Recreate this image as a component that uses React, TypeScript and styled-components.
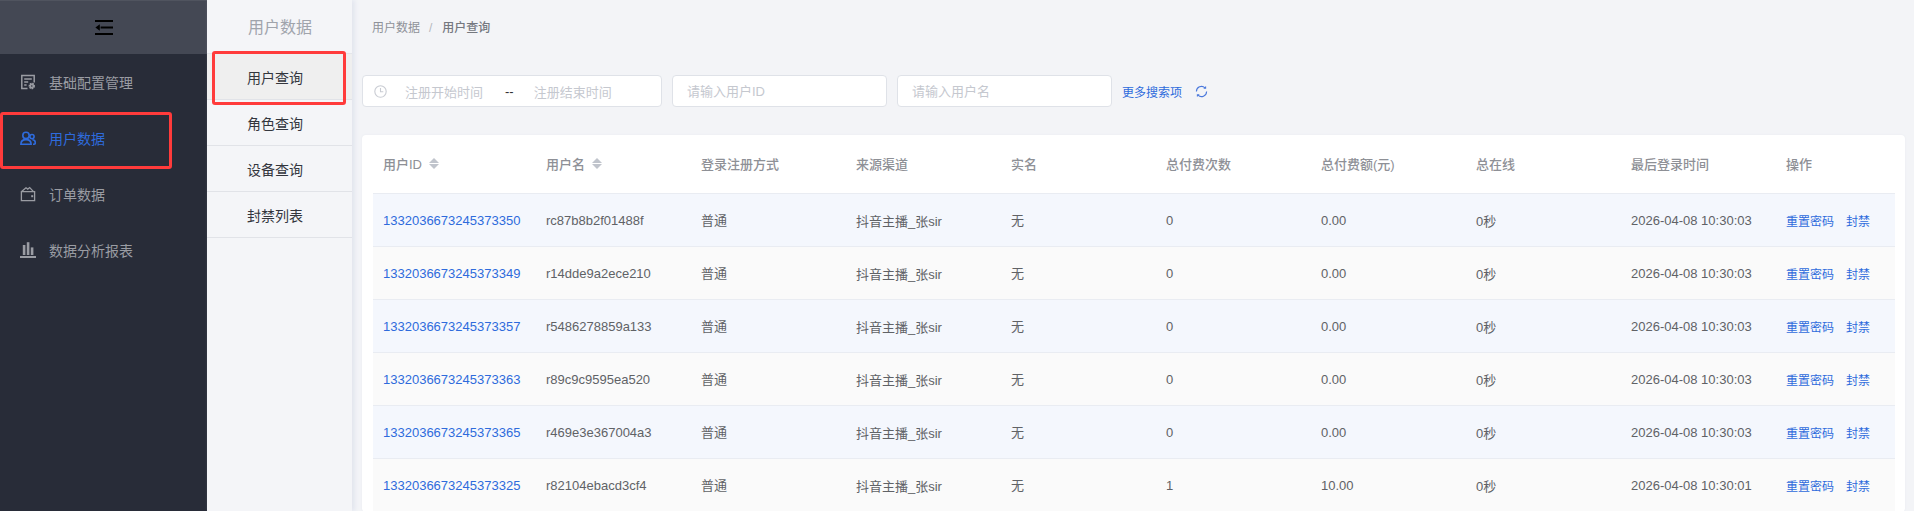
import React from "react";
import styled, { createGlobalStyle } from "styled-components";

const FONT = '"Liberation Sans", "Noto Sans CJK SC", sans-serif';

const GlobalStyle = createGlobalStyle`
  html, body {
    margin: 0;
    padding: 0;
    height: 100%;
    overflow: hidden;
  }
  body {
    font-family: ${FONT};
    background: #f3f4f7;
  }
`;

const menuItems = [
  { label: "基础配置管理", icon: "config" },
  { label: "用户数据", icon: "users", active: true },
  { label: "订单数据", icon: "wallet" },
  { label: "数据分析报表", icon: "chart" },
];

const subItems = ["用户查询", "角色查询", "设备查询", "封禁列表"];

const columns = [
  { title: "用户ID", sort: true },
  { title: "用户名", sort: true },
  { title: "登录注册方式" },
  { title: "来源渠道" },
  { title: "实名" },
  { title: "总付费次数" },
  { title: "总付费额(元)" },
  { title: "总在线" },
  { title: "最后登录时间" },
  { title: "操作" },
];

const rows = [
  ["1332036673245373350", "rc87b8b2f01488f", "0", "0.00", "2026-04-08 10:30:03"],
  ["1332036673245373349", "r14dde9a2ece210", "0", "0.00", "2026-04-08 10:30:03"],
  ["1332036673245373357", "r5486278859a133", "0", "0.00", "2026-04-08 10:30:03"],
  ["1332036673245373363", "r89c9c9595ea520", "0", "0.00", "2026-04-08 10:30:03"],
  ["1332036673245373365", "r469e3e367004a3", "0", "0.00", "2026-04-08 10:30:03"],
  ["1332036673245373325", "r82104ebacd3cf4", "1", "10.00", "2026-04-08 10:30:01"],
];

const MenuIcon = ({ name }: { name: string }) => {
  if (name === "config") {
    return (
      <svg width="16" height="16" viewBox="0 0 16 16" fill="none" stroke="currentColor" strokeWidth="1.5">
        <path d="M7.5 14.5H1.8V1.5h12.4v7" />
        <path d="M4.2 5h7.6M4.2 8h4M4.2 11h2.4" />
        <circle cx="11.8" cy="12" r="2.4" fill="currentColor" strokeDasharray="1.5 0.6" strokeWidth="1.6" />
        <circle cx="11.8" cy="12" r="0.8" fill="#282c38" stroke="none" />
      </svg>
    );
  }
  if (name === "users") {
    return (
      <svg width="16" height="16" viewBox="0 0 16 16" fill="none" stroke="currentColor" strokeWidth="1.6">
        <circle cx="6" cy="5.4" r="3.2" />
        <path d="M0.9 14.2c0-3 2.2-4.6 5.1-4.6s5.1 1.6 5.1 4.6z" />
        <circle cx="12" cy="6.6" r="2.1" />
        <path d="M12.4 9.8c1.9 0 2.9 1.2 2.9 3 0 .8-.5 1.4-1.3 1.4h-1" />
      </svg>
    );
  }
  if (name === "wallet") {
    return (
      <svg width="16" height="16" viewBox="0 0 16 16" fill="none" stroke="currentColor" strokeWidth="1.3">
        <path d="M1.4 5.6h13.2v9H1.4z" />
        <path d="M1.6 5.6 6 1.8l1.8 1.3 1.9-1.5 3.8 4" />
        <rect x="11.2" y="9.2" width="2" height="2" fill="currentColor" stroke="none" />
      </svg>
    );
  }
  return (
    <svg width="16" height="16" viewBox="0 0 16 16" fill="currentColor">
      <rect x="0" y="14" width="16" height="2" />
      <rect x="2.8" y="3" width="2.6" height="10" />
      <rect x="6.8" y="0.2" width="2.6" height="12.8" />
      <rect x="10.8" y="5.4" width="2.6" height="7.6" />
    </svg>
  );
};

const App = () => {
  return (
    <>
      <GlobalStyle />
      <Page>
        <Sidebar>
          <Collapse>
            <svg width="18" height="15" viewBox="0 0 18 15" fill="#000">
              <rect x="0" y="0" width="18" height="2" />
              <rect x="5.6" y="6.5" width="12.4" height="2" />
              <rect x="0" y="13" width="18" height="2" />
              <path d="M0.4 7.5 4.8 4.2v6.6z" />
            </svg>
          </Collapse>
          <Menu>
            {menuItems.map((item) => (
              <MenuItem key={item.label} $active={item.active}>
                <MenuIconBox>
                  <MenuIcon name={item.icon} />
                </MenuIconBox>
                {item.label}
                {item.active && <Highlight $left={0} $top={2} $width={172} $height={57} />}
              </MenuItem>
            ))}
          </Menu>
        </Sidebar>
        <SubMenu>
          <SubTitle>用户数据</SubTitle>
          {subItems.map((item, index) => (
            <SubItem key={item} $active={index === 0}>
              {item}
              {index === 0 && <Highlight $left={5} $top={-3} $width={134} $height={54} />}
            </SubItem>
          ))}
        </SubMenu>
        <Main>
          <Breadcrumb>
            <Crumb>用户数据</Crumb>
            <CrumbSep>/</CrumbSep>
            <Crumb $current>用户查询</Crumb>
          </Breadcrumb>
          <Filters>
            <DateRange>
              <svg width="13" height="13" viewBox="0 0 13 13" fill="none" stroke="#c9ccd3" strokeWidth="1.1">
                <circle cx="6.5" cy="6.5" r="5.7" />
                <path d="M6.5 3v3.7h2.8" />
              </svg>
              <DatePlaceholder $left={18}>注册开始时间</DatePlaceholder>
              <DateDash>--</DateDash>
              <DatePlaceholder $left={20}>注册结束时间</DatePlaceholder>
            </DateRange>
            <TextInput placeholder="请输入用户ID" readOnly />
            <TextInput placeholder="请输入用户名" readOnly />
            <MoreLink>更多搜索项</MoreLink>
            <RefreshButton>
              <svg width="13" height="13" viewBox="0 0 13 13" fill="none" stroke="#4a78dc" strokeWidth="1.1">
                <path d="M1.4 6.5a5.1 5.1 0 0 1 8.6-3.7" />
                <path d="M11.6 6.5a5.1 5.1 0 0 1-8.6 3.7" />
                <path d="M10.6 1.4v1.9H8.7" />
                <path d="M2.4 11.6V9.7h1.9" />
              </svg>
            </RefreshButton>
          </Filters>
          <Card>
            <HeaderRow>
              {columns.map((col) => (
                <HeaderCell key={col.title}>
                  {col.title}
                  {col.sort && (
                    <SortIcon>
                      <SortUp />
                      <SortDown />
                    </SortIcon>
                  )}
                </HeaderCell>
              ))}
            </HeaderRow>
            {rows.map((row, index) => (
              <Row key={row[0]} $odd={index % 2 === 0}>
                <Cell>
                  <Link>{row[0]}</Link>
                </Cell>
                <Cell>{row[1]}</Cell>
                <Cell $cjk>普通</Cell>
                <Cell>抖音主播_张sir</Cell>
                <Cell $cjk>无</Cell>
                <Cell>{row[2]}</Cell>
                <Cell>{row[3]}</Cell>
                <Cell>0秒</Cell>
                <Cell>{row[4]}</Cell>
                <Cell>
                  <ActionLink>重置密码</ActionLink>
                  <ActionLink>封禁</ActionLink>
                </Cell>
              </Row>
            ))}
          </Card>
        </Main>
      </Page>
    </>
  );
};

export default App;

const Page = styled.div`
  display: flex;
  width: 1914px;
  height: 511px;
  overflow: hidden;
  background: #f3f4f7;
`;

const Sidebar = styled.div`
  flex: 0 0 207px;
  background: #282c38;
`;

const Collapse = styled.div`
  height: 54px;
  display: flex;
  align-items: center;
  justify-content: center;
  background: #444854;
  border-top: 1px solid #50545f;
  box-sizing: border-box;
`;

const Menu = styled.div``;

const MenuItem = styled.div<{ $active?: boolean }>`
  position: relative;
  height: 56px;
  display: flex;
  align-items: center;
  padding-left: 20px;
  font-size: 14px;
  color: ${({ $active }) => ($active ? "#2e6bdc" : "#9a9ca3")};
`;

const MenuIconBox = styled.span`
  width: 29px;
  display: flex;
  align-items: center;
`;

const Highlight = styled.div<{ $left: number; $top: number; $width: number; $height: number }>`
  position: absolute;
  left: ${({ $left }) => $left}px;
  top: ${({ $top }) => $top}px;
  width: ${({ $width }) => $width}px;
  height: ${({ $height }) => $height}px;
  box-sizing: border-box;
  border: 3px solid #ff3b3b;
  border-radius: 3px;
`;

const SubMenu = styled.div`
  flex: 0 0 145px;
  background: #f4f5f8;
  box-shadow: 3px 0 4px #e3e6ef;
  z-index: 1;
`;

const SubTitle = styled.div`
  height: 53px;
  line-height: 56px;
  padding-left: 41px;
  font-size: 16px;
  color: #a0a4ac;
  border-bottom: 1px solid #e4e6ea;
`;

const SubItem = styled.div<{ $active?: boolean }>`
  position: relative;
  height: 45px;
  line-height: 48px;
  padding-left: 40px;
  font-size: 14px;
  color: #33363d;
  background: ${({ $active }) => ($active ? "#efefef" : "transparent")};
  border-bottom: 1px solid #e1e3e8;
`;

const Main = styled.div`
  flex: 1;
  min-width: 0;
  padding: 0 9px 0 10px;
`;

const Breadcrumb = styled.div`
  height: 75px;
  padding: 21px 0 0 10px;
  box-sizing: border-box;
  display: flex;
  align-items: flex-start;
  font-size: 12px;
  line-height: 14px;
`;

const Crumb = styled.span<{ $current?: boolean }>`
  color: ${({ $current }) => ($current ? "#75787f" : "#8f9299")};
  font-weight: ${({ $current }) => ($current ? 500 : 400)};
`;

const CrumbSep = styled.span`
  margin: 0 10px 0 9px;
  color: #b4b7bd;
`;

const Filters = styled.div`
  display: flex;
  align-items: center;
  height: 32px;
  margin-bottom: 28px;
`;

const DateRange = styled.div`
  width: 300px;
  height: 32px;
  box-sizing: border-box;
  display: flex;
  align-items: center;
  padding-left: 11px;
  background: #fff;
  border: 1px solid #dfe2e8;
  border-radius: 4px;
  margin-right: 10px;
`;

const DatePlaceholder = styled.span<{ $left: number }>`
  margin-left: ${({ $left }) => $left}px;
  font-size: 13px;
  color: #c5c8cf;
`;

const DateDash = styled.span`
  margin-left: 22px;
  font-size: 13px;
  color: #303133;
`;

const TextInput = styled.input`
  width: 215px;
  height: 32px;
  box-sizing: border-box;
  padding: 0 15px 0 14px;
  margin-right: 10px;
  background: #fff;
  border: 1px solid #dfe2e8;
  border-radius: 4px;
  outline: none;
  font-family: ${FONT};
  font-size: 13px;

  &::placeholder {
    color: #c5c8cf;
    opacity: 1;
  }
`;

const MoreLink = styled.span`
  font-size: 12px;
  color: #2e6bdc;
`;

const RefreshButton = styled.span`
  display: flex;
  margin-left: 13px;
`;

const Card = styled.div`
  width: 1543px;
  padding: 0 10px 0 11px;
  box-sizing: border-box;
  background: #fff;
  border-radius: 4px;
  box-shadow: 0 0 2px #e6e8ee;
`;

const GRID = "163px repeat(8, 155px) 1fr";

const HeaderRow = styled.div`
  display: grid;
  grid-template-columns: ${GRID};
  height: 59px;
  padding-bottom: 2px;
  align-items: center;
  border-bottom: 1px solid #e9ecf2;
  box-sizing: border-box;
`;

const HeaderCell = styled.div`
  display: flex;
  align-items: center;
  padding-left: 10px;
  font-size: 13px;
  font-weight: 500;
  color: #8e9096;
`;

const SortIcon = styled.span`
  display: inline-flex;
  flex-direction: column;
  gap: 1px;
  margin-left: 7px;
`;

const SortUp = styled.i`
  width: 0;
  height: 0;
  border-left: 5px solid transparent;
  border-right: 5px solid transparent;
  border-bottom: 5px solid #c0c4cc;
`;

const SortDown = styled.i`
  width: 0;
  height: 0;
  border-left: 5px solid transparent;
  border-right: 5px solid transparent;
  border-top: 5px solid #c0c4cc;
`;

const Row = styled.div<{ $odd: boolean }>`
  display: grid;
  grid-template-columns: ${GRID};
  height: 53px;
  box-sizing: border-box;
  align-items: center;
  background: ${({ $odd }) => ($odd ? "#f4f7fd" : "#fafafa")};
  border-bottom: 1px solid #e9ecf2;
`;

const Cell = styled.div<{ $cjk?: boolean }>`
  padding-left: 10px;
  margin-bottom: ${({ $cjk }) => ($cjk ? "2px" : "0")};
  font-size: 13px;
  color: #606266;
  white-space: nowrap;
`;

const Link = styled.span`
  color: #2e6bdc;
`;

const ActionLink = styled.span`
  font-size: 12px;
  color: #2e6bdc;
  margin-right: 12px;
`;
